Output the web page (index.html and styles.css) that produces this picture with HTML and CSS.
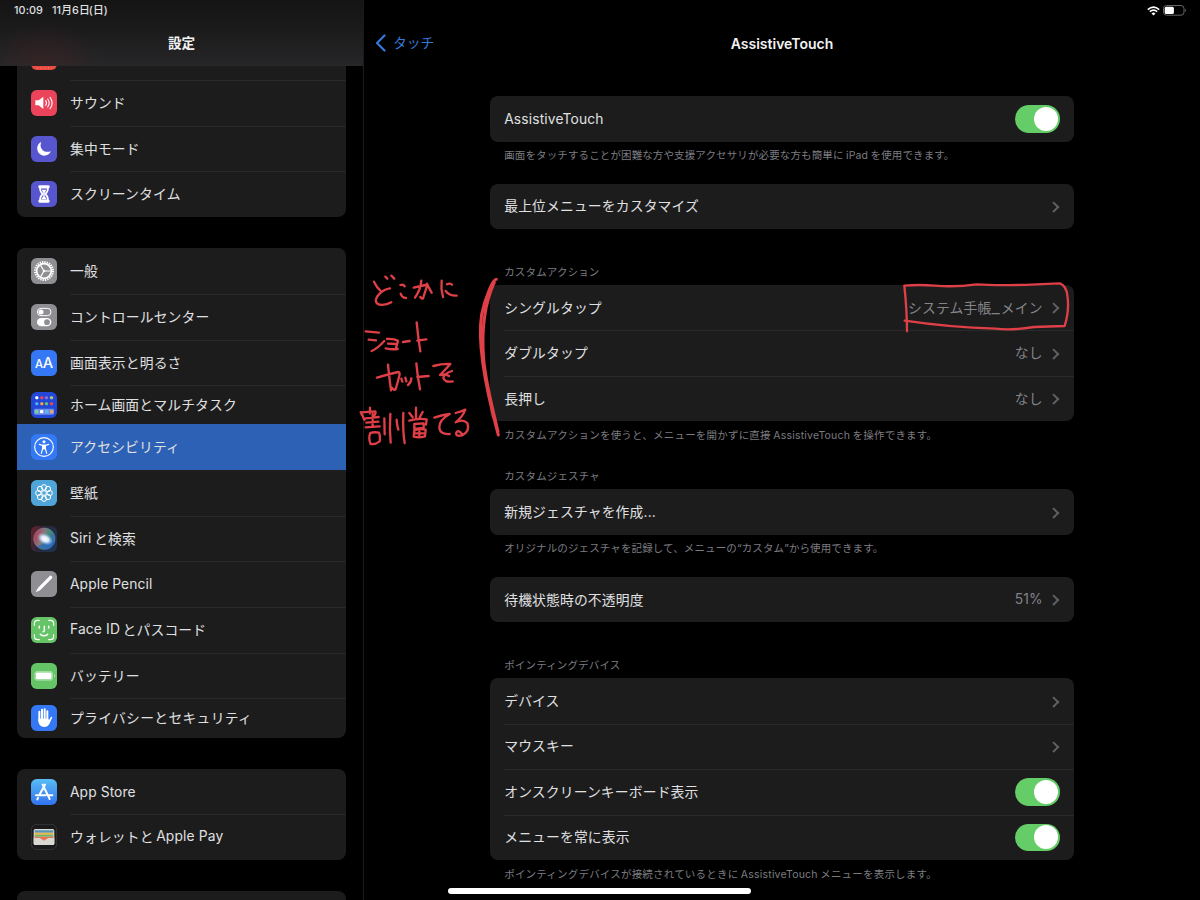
FILE: index.html
```
<!DOCTYPE html>
<html lang="ja">
<head>
  <meta charset="UTF-8" />
  <meta name="viewport" content="width=device-width, initial-scale=1.0" />
  <title>設定 - AssistiveTouch</title>
  <link rel="stylesheet" href="styles.css">
</head>
<body>
<div class="screen">

  <!-- sidebar -->
  <div class="sidebar">
    <div class="sidebar-header">
      <div class="status-left"><span>10:09</span><span>11月6日<i>(日)</i></span></div>
      <h1>設定</h1>
    </div>

    <div class="card first">
      <div class="row">
        <svg class="icon" viewBox="0 0 78 78"><rect width="78" height="78" rx="17" fill="#eb4b42"/><path d="M18 72h46" stroke="#f5b08a" stroke-width="2" stroke-dasharray="3 8"/></svg>
        <div class="label"></div>
      </div>
      <div class="row">
        <svg class="icon" viewBox="0 0 78 78"><rect width="78" height="78" rx="17" fill="#eb445a"/><path d="M14 31h9l14-11v37l-14-11h-9q-1 0-1-2v-11q0-2 1-2z" fill="#fff"/><path d="M44 32q5 7 0 14M50 27q9 12 0 24M57 22q13 17 0 34" fill="none" stroke="#fff" stroke-width="3.2" stroke-linecap="round"/></svg>
        <div class="label">サウンド</div>
      </div>
      <div class="row">
        <svg class="icon" viewBox="0 0 78 78"><rect width="78" height="78" rx="17" fill="#5856ce"/><path d="M31 18C14 25 15 49 31 57c11 5 24 0 29-11-10 3-20 2-26-5s-7-14-3-23z" fill="#fff"/></svg>
        <div class="label">集中モード</div>
      </div>
      <div class="row">
        <svg class="icon" viewBox="0 0 78 78"><rect width="78" height="78" rx="17" fill="#5856ce"/><rect x="22" y="13" width="34" height="9" rx="4" fill="#fff"/><rect x="22" y="56" width="34" height="9" rx="4" fill="#fff"/><path d="M27 20h24c0 10-1 13-8 19 7 6 8 9 8 19H27c0-10 1-13 8-19-7-6-8-9-8-19z" fill="#5856ce" stroke="#fff" stroke-width="5"/><path d="M32 26h14l-5 9v11l6 9H31l6-9V35z" fill="#fff"/></svg>
        <div class="label">スクリーンタイム</div>
      </div>
    </div>

    <div class="card">
      <div class="row">
        <svg class="icon" viewBox="0 0 78 78"><rect width="78" height="78" rx="17" fill="#8e8e93"/><circle cx="39" cy="39" r="27" fill="none" stroke="#fff" stroke-width="6" stroke-dasharray="4 3.07"/><circle cx="39" cy="39" r="22" fill="none" stroke="#fff" stroke-width="5"/><path d="M39 39h20M39 39L29 22M39 39L29 56" stroke="#fff" stroke-width="3.5"/><circle cx="39" cy="39" r="4" fill="#fff"/></svg>
        <div class="label">一般</div>
      </div>
      <div class="row">
        <svg class="icon" viewBox="0 0 78 78"><rect width="78" height="78" rx="17" fill="#8e8e93"/><rect x="19" y="13" width="41" height="22" rx="11" fill="none" stroke="#fff" stroke-width="3"/><circle cx="30" cy="24" r="7.5" fill="#fff"/><rect x="18" y="42" width="43" height="25" rx="12.5" fill="#fff"/><circle cx="48" cy="54.5" r="8.5" fill="#8e8e93"/></svg>
        <div class="label">コントロールセンター</div>
      </div>
      <div class="row">
        <svg class="icon" viewBox="0 0 78 78"><rect width="78" height="78" rx="17" fill="#3478f6"/><text x="12" y="54" class="aa" font-size="34">A</text><text x="35" y="54" class="aa" font-size="44">A</text></svg>
        <div class="label">画面表示と明るさ</div>
      </div>
      <div class="row short">
        <svg class="icon" viewBox="0 0 78 78"><rect width="78" height="78" rx="17" fill="#2347d6"/><rect x="9" y="50" width="60" height="18" rx="4" fill="#6f8fe8"/>
          <g fill="#fff"><rect x="13" y="13" width="9" height="9" rx="3"/><rect x="28" y="13" width="9" height="9" rx="3" fill="#f0465a"/><rect x="42" y="13" width="9" height="9" rx="3" fill="#8d70dd"/><rect x="57" y="13" width="9" height="9" rx="3" fill="#b9c67d"/>
          <rect x="13" y="31" width="9" height="9" rx="3" fill="#45b6fa"/><rect x="28" y="31" width="9" height="9" rx="3" fill="#ffa53c"/><rect x="42" y="31" width="9" height="9" rx="3" fill="#63c779"/><rect x="57" y="31" width="9" height="9" rx="3" fill="#f34747"/>
          <rect x="12" y="54" width="10" height="10" rx="3" fill="#77d591"/><rect x="27" y="54" width="10" height="10" rx="3"/><rect x="42" y="54" width="10" height="10" rx="3" fill="#58b8f4"/><rect x="57" y="54" width="10" height="10" rx="3" fill="#f4a05f"/></g></svg>
        <div class="label">ホーム画面とマルチタスク</div>
      </div>
      <div class="row selected">
        <svg class="icon" viewBox="0 0 78 78"><rect width="78" height="78" rx="17" fill="#3478f6"/><circle cx="39" cy="39" r="28" fill="none" stroke="#fff" stroke-width="3.5"/><circle cx="39" cy="23" r="4.5" fill="#fff"/><path d="M25 31l10 3v9l-4 15M53 31l-10 3v9l4 15M35 34h8M36 44h6" fill="none" stroke="#fff" stroke-width="3.6" stroke-linecap="round"/><path d="M34 32h10v14H34z" fill="#fff"/></svg>
        <div class="label">アクセシビリティ</div>
      </div>
      <div class="row no-line">
        <svg class="icon" viewBox="0 0 78 78"><rect width="78" height="78" rx="17" fill="#50a5d8"/><g fill="none" stroke="#fff" stroke-width="3"><circle cx="39" cy="39" r="7"/><circle cx="39" cy="22" r="8"/><circle cx="51" cy="27" r="8"/><circle cx="56" cy="39" r="8"/><circle cx="51" cy="51" r="8"/><circle cx="39" cy="56" r="8"/><circle cx="27" cy="51" r="8"/><circle cx="22" cy="39" r="8"/><circle cx="27" cy="27" r="8"/></g></svg>
        <div class="label">壁紙</div>
      </div>
      <div class="row">
        <svg class="icon" viewBox="0 0 78 78">
          <defs>
            <linearGradient id="siriBg" x1="0" x2="1" y2=".4"><stop offset="0" stop-color="#70202f"/><stop offset=".5" stop-color="#29283b"/><stop offset="1" stop-color="#20304d"/></linearGradient>
            <linearGradient id="siriOrb" x1="0" y1=".3" x2="1" y2=".7"><stop offset="0" stop-color="#b83349"/><stop offset=".38" stop-color="#8b777f"/><stop offset=".6" stop-color="#468b7c"/><stop offset="1" stop-color="#2465c5"/></linearGradient>
            <radialGradient id="siriGlow"><stop offset="0" stop-color="#fff"/><stop offset=".45" stop-color="#e6f3ff" stop-opacity=".9"/><stop offset="1" stop-color="#9bf" stop-opacity="0"/></radialGradient>
          </defs>
          <rect width="78" height="78" rx="17" fill="url(#siriBg)"/><circle cx="40" cy="38" r="32" fill="url(#siriOrb)" stroke="#659ba3" stroke-width="1.5"/><path d="M18 60q20-4 27-22 13 14 25 12-8 24-32 20-12-2-20-10z" fill="#2a69bd" opacity=".75"/><ellipse cx="42" cy="39" rx="26" ry="17" fill="url(#siriGlow)" transform="rotate(28 42 39)"/></svg>
        <div class="label">Siri<span class="gap"></span>と検索</div>
      </div>
      <div class="row">
        <svg class="icon" viewBox="0 0 78 78"><rect width="78" height="78" rx="17" fill="#8e8e93"/><path d="M59 19L26 52" stroke="#fff" stroke-width="10" stroke-linecap="round"/><path d="M21 51l7 7-13 5q-1-1 0-2z" fill="#fff"/></svg>
        <div class="label latin">Apple Pencil</div>
      </div>
      <div class="row">
        <svg class="icon" viewBox="0 0 78 78"><rect width="78" height="78" rx="17" fill="#65c466"/><g fill="none" stroke="#fff" stroke-width="3.5" stroke-linecap="round"><path d="M10 25v-5q0-10 10-10h5M53 10h5q10 0 10 10v5M68 53v5q0 10-10 10h-5M25 68h-5q-10 0-10-10v-5"/><path d="M25 28v5M53 28v5M40 28v13q0 3-4 3M28 52q11 9 22 0" stroke-width="4.5"/></g></svg>
        <div class="label">Face ID<span class="gap"></span>とパスコード</div>
      </div>
      <div class="row">
        <svg class="icon" viewBox="0 0 78 78"><rect width="78" height="78" rx="17" fill="#65c466"/><rect x="10" y="24" width="56" height="29" rx="9" fill="#a3dca3"/><path d="M69 34q6 4 0 9z" fill="#c1e7c1"/><rect x="15" y="29" width="46" height="19" rx="4" fill="#fff"/></svg>
        <div class="label">バッテリー</div>
      </div>
      <div class="row short">
        <svg class="icon" viewBox="0 0 78 78"><rect width="78" height="78" rx="17" fill="#3478f6"/><g stroke="#fff" stroke-width="6" stroke-linecap="round"><path d="M25 20v28M33 14v30M41 13v30M49 19v30"/></g><path d="M22 41h30l2 5 5-9q3-3 5 0L55 57q-5 9-15 9-18 0-18-21z" fill="#fff"/></svg>
        <div class="label last">プライバシーとセキュリティ</div>
      </div>
    </div>

    <div class="card">
      <div class="row">
        <svg class="icon" viewBox="0 0 78 78"><defs><linearGradient id="store" x2="0" y2="1"><stop offset="0" stop-color="#59bdf5"/><stop offset="1" stop-color="#3272f0"/></linearGradient></defs><rect width="78" height="78" rx="17" fill="url(#store)"/><g stroke="#fff" stroke-width="6" stroke-linecap="round"><path d="M35 17l21 43M42 17L25 48M21 57l-2 4M15 49h29M54 49h10"/></g></svg>
        <div class="label latin">App Store</div>
      </div>
      <div class="row">
        <svg class="icon" viewBox="0 0 78 78"><rect x="1" y="1" width="76" height="76" rx="17" fill="#1b1b1d" stroke="#3b3b3e" stroke-width="2.5"/><rect x="8" y="15" width="62" height="48" rx="5" fill="#dedbd3"/><path d="M11 19h56v7H11z" fill="#5596b9"/><path d="M11 26h56v6H11z" fill="#eeb54a"/><path d="M11 32h56v6H11z" fill="#6bb767"/><path d="M11 38h56v5H51q-12 13-24 0H11z" fill="#e77459"/><path d="M8 42h18q13 10 26 0h18v17q0 4-5 4H13q-5 0-5-4z" fill="#dad8d2"/><path d="M27 41h24l-12 9z" fill="#e77459"/></svg>
        <div class="label">ウォレットと<span class="gap"></span>Apple Pay</div>
      </div>
    </div>

    <div class="card"><div class="row"></div></div>
  </div>

  <!-- detail pane -->
  <div class="detail">
    <div class="status-right">
      <svg width="13" height="10" viewBox="0 0 13 10"><g fill="none" stroke="#fff" stroke-width="1.6"><path d="M.8 3.6q5.700-5 11.400 0M2.800 5.700q3.700-3.200 7.400 0"/></g><path d="M4.500 7.400q2-1.600 4 0l-2 2.100z" fill="#fff"/></svg>
      <svg width="24" height="11" viewBox="0 0 24 11"><rect x=".5" y=".5" width="20.500" height="9.700" rx="3" fill="none" stroke="#666"/><rect x="1.700" y="1.700" width="9.200" height="7.300" rx="1.500" fill="#fff"/><path d="M22.200 3.700q2 1.600 0 3.300z" fill="#666"/></svg>
    </div>
    <div class="navbar">
      <a class="back" href="#"><svg width="11" height="18" viewBox="0 0 11 18"><path d="M9.500 1.500L2 9l7.500 7.500" fill="none" stroke="#3478d8" stroke-width="2.2" stroke-linecap="round" stroke-linejoin="round"/></svg>タッチ</a>
      <h2>AssistiveTouch</h2>
    </div>

    <div class="content">
      <div class="card">
        <div class="item latin"><span>AssistiveTouch</span><span class="toggle"></span></div>
      </div>
      <p class="note">画面をタッチすることが困難な方や支援アクセサリが必要な方も簡単に<span class="gap"></span>iPad<span class="gap"></span>を使用できます。</p>

      <div class="card">
        <div class="item"><span>最上位メニューをカスタマイズ</span><span class="chevron"></span></div>
      </div>

      <h3 class="wide">カスタムアクション</h3>
      <div class="card">
        <div class="item"><span>シングルタップ</span><span class="value">システム手帳<span class="under">_</span>メイン</span><span class="chevron"></span></div>
        <div class="item"><span>ダブルタップ</span><span class="value">なし</span><span class="chevron"></span></div>
        <div class="item"><span>長押し</span><span class="value">なし</span><span class="chevron"></span></div>
      </div>
      <p class="note low">カスタムアクションを使うと、メニューを開かずに直接<span class="gap"></span>AssistiveTouch<span class="gap"></span>を操作できます。</p>

      <h3>カスタムジェスチャ</h3>
      <div class="card">
        <div class="item"><span>新規ジェスチャを作成...</span><span class="chevron"></span></div>
      </div>
      <p class="note">オリジナルのジェスチャを記録して、メニューの<span class="quote">“</span>カスタム<span class="quote">”</span>から使用できます。</p>

      <div class="card">
        <div class="item"><span>待機状態時の不透明度</span><span class="value">51%</span><span class="chevron"></span></div>
      </div>

      <h3 class="wide">ポインティングデバイス</h3>
      <div class="card">
        <div class="item"><span>デバイス</span><span class="chevron"></span></div>
        <div class="item"><span>マウスキー</span><span class="chevron"></span></div>
        <div class="item"><span>オンスクリーンキーボード表示</span><span class="toggle"></span></div>
        <div class="item"><span>メニューを常に表示</span><span class="toggle"></span></div>
      </div>
      <p class="note low">ポインティングデバイスが接続されているときに<span class="gap"></span>AssistiveTouch<span class="gap"></span>メニューを表示します。</p>
    </div>
  </div>

  <!-- handwritten pen marks -->
  <svg class="ink" width="1200" height="900" viewBox="0 0 1200 900">
    <g transform="translate(355 260) scale(.33333)">
      <path d="M57 65q8 17 19 27M105 85C83 88 60 109 63 125c4 14 30 11 46 2M91 50l6 6M109 47l9 9"/>
      <path d="M136 75q9-3 13 4M137 101q4 13 16 13"/>
      <path d="M176 83q20-5 35-8 7 0 2 12l-9 28q-3 3-8-4M199 62q-2 27-19 51M216 71q7 15 14 27"/>
      <path d="M260 62q-3 24 4 49M276 73q8-5 15 1M272 93q11 15 33 14"/>
      <path d="M32 214l40 4M41 239l22 2M50 273q17-7 38-30"/>
      <path d="M96 237q22-1 33 5-3 12-7 26M99 251l25 1M92 265q18 4 36 2M144 246l20-3M185 187q4 43 11 87M187 242l27-4"/>
      <path d="M66 353q30-9 63-17 8 0 3 15-4 17-10 36-4 6-13-5M99 314q3 33 9 77M139 356l3 9M151 353l3 11M169 355q0 12-10 20M184 310q3 35 11 78M187 351l34-3"/>
      <path d="M235 318q26-7 51-6-13 15-31 33 16-4 27 3M291 333q-24 8-26 20 2 15 28 11"/>
      <path d="M17 457q7 11 11 23M18 457l43-3q3 6-5 15M45 443v17M32 475l39-4M34 488l36-3M53 462v38M32 502l42-3M46 519q-7 15 1 33 14 2 27-8 2-18-2-26-15-3-26 1M88 475l1 48M106 462q-3 45 1 86"/>
      <path d="M125 479q0 13 5 30M145 459q-2 55 4 90"/>
      <path d="M183 443v34M163 459l10 13M203 456l-9 16M163 482q27-8 52-4l-2 16M178 492l28-2v14l-28 3zM178 511l-2 19q17 4 34-1l2-20q-17-5-34 2M193 510v20M178 520h32"/>
      <path d="M238 473q25-9 46-11-31 18-31 39 0 23 31 21"/>
      <path d="M302 459q17-5 29-10-9 23-29 38 21-11 35 2 9 25-16 37-20 5-17-9 6-9 19 7"/>
      <path class="thick" d="M424 58c-11 0-34 56-44 105-15 89 11 219 50 362M418 67c-28 61-39 142-32 231 7 75 27 145 43 217"/>
    </g>
    <g transform="translate(890 270) scale(.33333)">
      <path class="box" d="M51 184q0-62-8-137 45-4 91 0 61 5 126-4 80 6 250-3 19 8 22 36 7 43-8 92-51 1-92 3-67 11-116 5-138-4-272-24"/>
    </g>
  </svg>
  <div class="home-indicator"></div>
</div>
</body>
</html>
```
FILE: styles.css
```
* {
  box-sizing: border-box;
}

body {
  margin: 0;
  background: #000;
  color: #e0e0e2;
  font-family: 'Inter', 'Noto Sans CJK JP', sans-serif;
  font-size: 13.8px;
}

h1, h2, h3, p {
  margin: 0;
}

.screen {
  position: relative;
  display: flex;
  width: 1200px;
  height: 900px;
  overflow: hidden;
}

.card {
  background: #1c1c1d;
  border-radius: 8px;
  overflow: hidden;
}

/* sidebar */
.sidebar {
  width: 364px;
  height: 900px;
  flex: none;
  overflow: hidden;
  border-right: 1px solid #1b1b1c;
}

.sidebar-header {
  position: relative;
  z-index: 1;
  height: 66px;
  background: radial-gradient(ellipse 55px 40px at 45px 62px, rgba(90, 35, 38, 0.3), transparent),
              linear-gradient(#141415, #1b1b1c 45%, #262628);
  border-bottom: 1px solid #28282a;
}

.status-left {
  display: flex;
  gap: 9px;
  padding-left: 14px;
  height: 21px;
  line-height: 21px;
  font-size: 10.8px;
  font-weight: 500;
  letter-spacing: 0.1px;
}

.status-left i {
  font-style: normal;
  margin-left: -1px;
}

.sidebar-header h1 {
  line-height: 20px;
  margin-top: 12px;
  font-size: 13.6px;
  font-weight: 700;
  text-align: center;
  color: #f2f2f2;
}

.sidebar .card {
  width: 328.5px;
  margin: 0 0 31.3px 17.3px;
}

.sidebar .card.first {
  margin-top: -31.5px;
}

.row {
  display: flex;
  align-items: center;
  height: 45.67px;
  padding-left: 13.7px;
}

.row.short {
  height: 39.1px;
}

.row.selected {
  background: #2d61b5;
}

.icon {
  width: 26px;
  height: 26px;
  flex: none;
  margin-right: 13px;
}

.aa {
  fill: #fff;
  font-family: 'Inter', sans-serif;
  font-weight: 500;
}

.label {
  flex: 1;
  height: 100%;
  display: flex;
  align-items: center;
  padding-bottom: 3px;
  letter-spacing: 0.15px;
  border-top: 1px solid #29292b;
}

.label.latin {
  padding-bottom: 1px;
  letter-spacing: 0.1px;
}

.label.last {
  letter-spacing: 0.3px;
}

.row:first-child .label,
.selected .label,
.no-line .label {
  border-top-color: transparent;
}

.gap {
  display: inline-block;
  width: 2.5px;
}

/* detail */
.detail {
  flex: 1;
}

.status-right {
  display: flex;
  justify-content: flex-end;
  align-items: center;
  gap: 3px;
  height: 21px;
  padding-right: 13px;
}

.navbar {
  display: grid;
  grid-template-columns: 126px 584px 1fr;
  align-items: center;
  height: 44px;
}

.back {
  display: flex;
  align-items: center;
  gap: 7px;
  height: 20px;
  line-height: 18px;
  padding-left: 11px;
  color: #3478d8;
  text-decoration: none;
}

.navbar h2 {
  font-size: 14px;
  font-weight: 600;
  text-align: center;
  color: #f2f2f2;
}

.content {
  width: 583.5px;
  margin: 31px 0 0 126.2px;
}

.item {
  display: flex;
  align-items: center;
  height: 45.5px;
  padding-right: 14px;
  margin-left: 14px;
  letter-spacing: 0.15px;
  border-top: 1px solid #29292b;
}

.item:first-child {
  border-top-color: transparent;
}

.item > span:first-child {
  flex: 1;
  padding-bottom: 3px;
}

.item.latin > span:first-child {
  padding-bottom: 0;
}

.item > .value {
  padding-bottom: 3px;
  color: #858589;
}

.under {
  display: inline-block;
  width: 9.5px;
  text-align: center;
  transform: scaleX(1.3);
}

.chevron {
  width: 7.5px;
  height: 7.5px;
  margin: 0 2px 0 7.5px;
  border: solid #606064;
  border-width: 2px 2px 0 0;
  transform: rotate(45deg);
}

.toggle {
  width: 45px;
  height: 27.5px;
  margin-bottom: 1px;
  padding: 1.8px;
  border-radius: 14px;
  background: #65cd68;
}

.toggle::after {
  content: "";
  display: block;
  width: 24px;
  height: 24px;
  margin-left: auto;
  border-radius: 50%;
  background: #fff;
}

.note {
  height: 42.2px;
  padding: 5px 0 0 14px;
  font-size: 10.5px;
  line-height: 18px;
  letter-spacing: 0.12px;
  color: #7c7c80;
  white-space: nowrap;
}

.note.low {
  padding-top: 6px;
  letter-spacing: 0.2px;
}

.note .quote {
  font-family: 'Inter', sans-serif;
}

h3 {
  padding-left: 14px;
  height: 25.6px;
  padding-top: 4px;
  font-size: 10.5px;
  font-weight: 400;
  line-height: 18px;
  letter-spacing: 0.15px;
  color: #7c7c80;
}

h3.wide {
  height: 55.7px;
  padding-top: 34.5px;
}

/* pen marks */
.ink {
  position: absolute;
  left: 0;
  top: 0;
  pointer-events: none;
}

.ink path {
  fill: none;
  stroke: #df3f47;
  stroke-width: 7;
  stroke-linecap: round;
  stroke-linejoin: round;
}

.ink .thick {
  stroke-width: 9;
}

.home-indicator {
  position: absolute;
  left: 448px;
  top: 888px;
  width: 303px;
  height: 5.5px;
  border-radius: 3px;
  background: #fff;
}
```
